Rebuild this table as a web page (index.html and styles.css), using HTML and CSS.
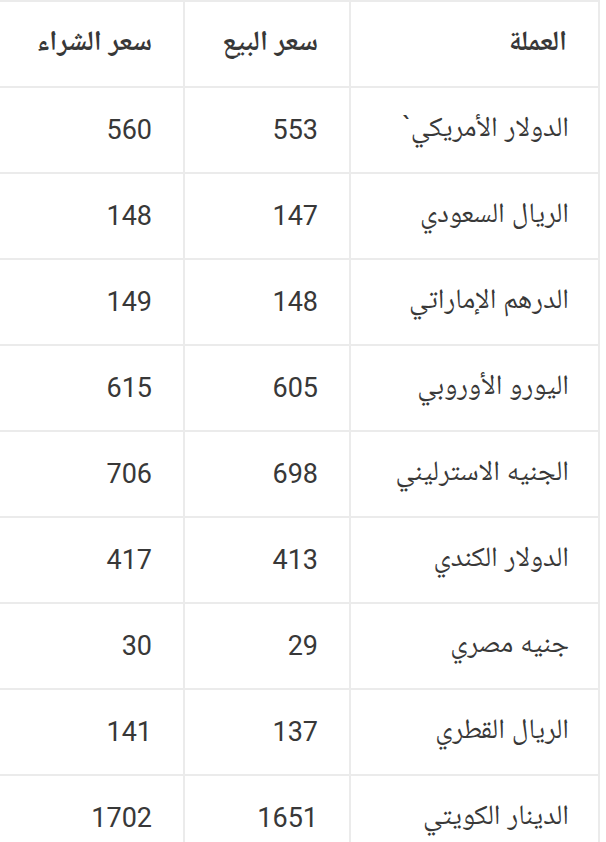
FILE: index.html
```html
<!DOCTYPE html>
<html lang="ar" dir="rtl">
<head>
<meta charset="utf-8">
<link rel="stylesheet" href="styles.css">
</head>
<body>
<table class="rates">
  <colgroup>
    <col class="c-name"><col class="c-sell"><col class="c-buy">
  </colgroup>
  <thead>
    <tr><th>العملة</th><th>سعر البيع</th><th>سعر الشراء</th></tr>
  </thead>
  <tbody>
    <tr><td class="name">الدولار الأمريكي`</td><td>553</td><td>560</td></tr>
    <tr><td class="name">الريال السعودي</td><td>147</td><td>148</td></tr>
    <tr><td class="name">الدرهم الإماراتي</td><td>148</td><td>149</td></tr>
    <tr><td class="name">اليورو الأوروبي</td><td>605</td><td>615</td></tr>
    <tr><td class="name">الجنيه الاسترليني</td><td>698</td><td>706</td></tr>
    <tr><td class="name">الدولار الكندي</td><td>413</td><td>417</td></tr>
    <tr><td class="name">جنيه مصري</td><td>29</td><td>30</td></tr>
    <tr><td class="name">الريال القطري</td><td>137</td><td>141</td></tr>
    <tr><td class="name">الدينار الكويتي</td><td>1651</td><td>1702</td></tr>
  </tbody>
</table>
</body>
</html>
```
FILE: styles.css
```css
html, body {
  margin: 0;
  padding: 0;
  background: #fff;
}
body {
  font-family: Roboto, "Noto Naskh Arabic", "Noto Sans Arabic", "DejaVu Sans", sans-serif;
  color: #383838;
  overflow: hidden;
}
.rates {
  width: 602px;
  margin-right: 6px;
  border-collapse: collapse;
  table-layout: fixed;
}
.c-name { width: 249px; }
.c-sell { width: 166px; }
.c-buy { width: 187px; }
.rates th, .rates td {
  border: 2px solid #ebebeb;
  height: 84px;
  padding: 0 31px 0 10px;
  text-align: right;
  vertical-align: middle;
  font-size: 27px;
  font-weight: 400;
  white-space: nowrap;
}
.rates th {
  font-weight: 700;
  font-size: 28px;
}
.rates td.name {
  font-size: 28px;
  padding-right: 29px;
}
```
